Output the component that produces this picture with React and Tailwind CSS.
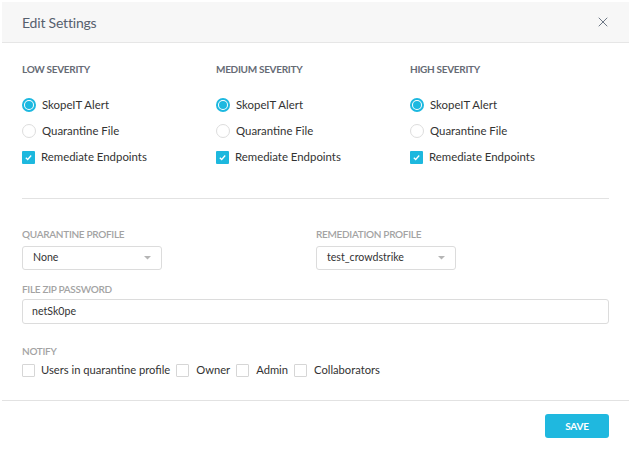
import { X } from "lucide-react";

const columns = ["Low Severity", "Medium Severity", "High Severity"];

const Radio = ({ checked }) =>
  checked ? (
    <span className="w-[14px] h-[14px] shrink-0 rounded-full border-2 border-[#1cb8e0] flex items-center justify-center">
      <span className="w-[8px] h-[8px] rounded-full bg-[#1cb8e0]" />
    </span>
  ) : (
    <span className="block w-[14px] h-[14px] shrink-0 rounded-full border border-[#dddddd] bg-white" />
  );

const Checkbox = ({ checked }) =>
  checked ? (
    <span className="w-[13px] h-[13px] shrink-0 rounded-[1px] bg-[#1db8de] flex items-center justify-center">
      <svg width="9" height="9" viewBox="0 0 10 10" fill="none">
        <path d="M2 5.2 L4.1 7.2 L8 2.8" stroke="white" strokeWidth="1.4" />
      </svg>
    </span>
  ) : (
    <span className="block w-[13px] h-[13px] shrink-0 rounded-[1px] border border-[#d6d6d6] bg-white" />
  );

const Caret = () => (
  <svg width="7" height="4" viewBox="0 0 7 4">
    <path d="M0 0 L7 0 L3.5 3.5 Z" fill="#b5b5b5" />
  </svg>
);

const Select = ({ value }) => (
  <div className="w-[140px] h-[24px] border border-[#dcdcdc] rounded-[3px] bg-white flex items-center justify-between pl-[10px] pr-[10px] text-[10.6px] text-[#333]">
    <span>{value}</span>
    <Caret />
  </div>
);

const FieldLabel = ({ children, className = "" }) => (
  <div
    className={`h-[12px] leading-[12px] text-[10px] font-semibold uppercase text-[#a3a3a3] tracking-[-0.3px] ${className}`}
  >
    {children}
  </div>
);

const notify = ["Users in quarantine profile", "Owner", "Admin", "Collaborators"];

export default function App() {
  return (
    <div
      className="w-[631px] h-[451px] bg-white pt-[2px] px-[2px]"
      style={{ fontFamily: "Lato, 'Open Sans', sans-serif" }}
    >
      <div className="h-[41px] bg-[#f7f7f7] border-b border-[#e6e6e6] pl-[20px] pr-[18px] flex items-center justify-between">
        <span className="text-[14px] text-[#56606e] tracking-[-0.2px]">Edit Settings</span>
        <X className="w-[16px] h-[16px] text-[#6d7785]" strokeWidth={1.5} />
      </div>

      <div className="px-[20px]">
        <div className="grid grid-cols-[194px_194px_1fr] pt-[20px]">
          {columns.map((c) => (
            <div key={c}>
              <div className="h-[12px] leading-[12px] text-[10px] font-bold uppercase text-[#666b75] tracking-[-0.3px]">
                {c}
              </div>
              <div className="mt-[17px] flex flex-col">
                <div className="h-[26px] flex items-center gap-[6px] text-[11.4px] text-[#333]">
                  <Radio checked />
                  <span>SkopeIT Alert</span>
                </div>
                <div className="h-[26px] flex items-center gap-[6px] text-[11.4px] text-[#333]">
                  <Radio />
                  <span>Quarantine File</span>
                </div>
                <div className="h-[26px] flex items-center gap-[6px] text-[11.4px] text-[#333]">
                  <Checkbox checked />
                  <span>Remediate Endpoints</span>
                </div>
              </div>
            </div>
          ))}
        </div>

        <div className="mt-[28px] border-t border-[#e2e2e2]" />

        <div className="grid grid-cols-[294px_1fr] mt-[29px]">
          <div>
            <FieldLabel>Quarantine Profile</FieldLabel>
            <div className="mt-[6px]">
              <Select value="None" />
            </div>
          </div>
          <div>
            <FieldLabel>Remediation Profile</FieldLabel>
            <div className="mt-[6px]">
              <Select value="test_crowdstrike" />
            </div>
          </div>
        </div>

        <FieldLabel className="mt-[13px]">File Zip Password</FieldLabel>
        <div className="mt-[4px] h-[25px] border border-[#dcdcdc] rounded-[3px] flex items-center px-[9px] text-[10.6px] text-[#333]">
          netSk0pe
        </div>

        <FieldLabel className="mt-[21px]">Notify</FieldLabel>
        <div className="mt-[6px] h-[14px] flex items-center gap-[6px] text-[11.2px] text-[#333]">
          {notify.map((n, i) => (
            <div
              key={n}
              className={`flex items-center ${i === 0 ? "gap-[6px]" : "gap-[7px]"}`}
            >
              <Checkbox />
              <span>{n}</span>
            </div>
          ))}
        </div>
      </div>

      <div className="mt-[23px] border-t border-[#e2e2e2] px-[20px] pt-[13px] flex justify-end">
        <button className="w-[64px] h-[24px] rounded-[3px] bg-[#1fb8df] text-white text-[10px] font-bold tracking-[-0.2px]">
          SAVE
        </button>
      </div>
    </div>
  );
}
